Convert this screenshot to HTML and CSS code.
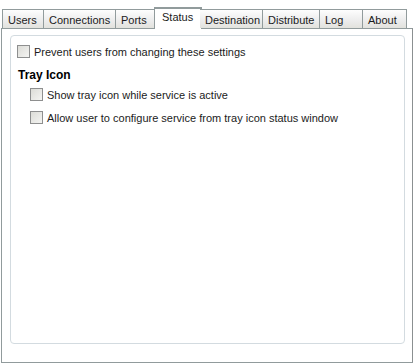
FILE: index.html
```html
<!DOCTYPE html>
<html lang="en">
<head>
    <meta charset="UTF-8">
    <title>Service Settings</title>
    <link rel="stylesheet" href="styles.css">
</head>
<body>
    <div class="window">
        <div class="tabs">
            <div class="tab tab-users">Users</div>
            <div class="tab tab-connections">Connections</div>
            <div class="tab tab-ports">Ports</div>
            <div class="tab tab-status active">Status</div>
            <div class="tab tab-destination">Destination</div>
            <div class="tab tab-distribute">Distribute</div>
            <div class="tab tab-log">Log</div>
            <div class="tab tab-about">About</div>
        </div>
        <div class="panel">
            <div class="group">
                <label class="check">
                    <span class="box"></span>
                    Prevent users from changing these settings
                </label>
                <div class="heading">Tray Icon</div>
                <label class="check indent">
                    <span class="box"></span>
                    Show tray icon while service is active
                </label>
                <label class="check indent">
                    <span class="box"></span>
                    Allow user to configure service from tray icon status window
                </label>
            </div>
        </div>
    </div>
</body>
</html>
```

FILE: styles.css
```css
body {
    margin: 0;
    padding: 0;
    background-color: #fff;
    font-family: "Liberation Sans", Arial, sans-serif;
    font-size: 11px;
    color: #000;
}

.window {
    width: 413px;
    height: 363px;
    padding: 7px 0 0 1px;
    box-sizing: border-box;
    display: flex;
    flex-direction: column;
}

.tabs {
    display: flex;
    align-items: flex-end;
    padding-left: 1px;
    height: 21px;
    position: relative;
    z-index: 1;
}

.tab {
    height: 19px;
    box-sizing: border-box;
    border: 1px solid #919b9c;
    border-bottom: none;
    border-left: none;
    background: linear-gradient(#fdfdfd, #ececec 60%, #e2e2dd);
    padding: 4px 0 0 5px;
    white-space: nowrap;
    overflow: hidden;
    color: #1b1b1b;
}

.tab:first-child {
    border-left: 1px solid #919b9c;
}

.tab.active {
    height: 22px;
    margin: 0 -2px -1px -1px;
    border-left: 1px solid #919b9c;
    border-top: 2px solid #919b9c;
    background: #fff;
    padding: 2px 0 0 7px;
}

.tab.active + .tab {
    border-left: none;
}

.tab-users { width: 42px; }
.tab-connections { width: 72px; }
.tab-ports { width: 39px; }
.tab-status { width: 48px; }
.tab-destination { width: 63px; }
.tab-distribute { width: 57px; }
.tab-log { width: 43px; }
.tab-about { width: 44px; }

.panel {
    flex: 1;
    border: 1px solid #919b9c;
    border-right-color: #8b9091;
    background: #fff;
    padding: 6px 7px 18px 8px;
    display: flex;
}

.group {
    flex: 1;
    border: 1px solid #d3dbe0;
    border-radius: 4px;
    padding: 9px 0 0 6px;
}

.check {
    display: flex;
    align-items: center;
    height: 13px;
    margin-bottom: 10px;
    color: #1b1b1b;
}

.check.indent {
    margin-left: 13px;
}

.box {
    width: 11px;
    height: 11px;
    border: 1px solid #8e8f8f;
    background: linear-gradient(135deg, #dcdcd7, #f4f4f2);
    margin-right: 4px;
    flex-shrink: 0;
}

.heading {
    font-weight: bold;
    font-size: 12px;
    margin: 2px 0 6px 1px;
}
```
